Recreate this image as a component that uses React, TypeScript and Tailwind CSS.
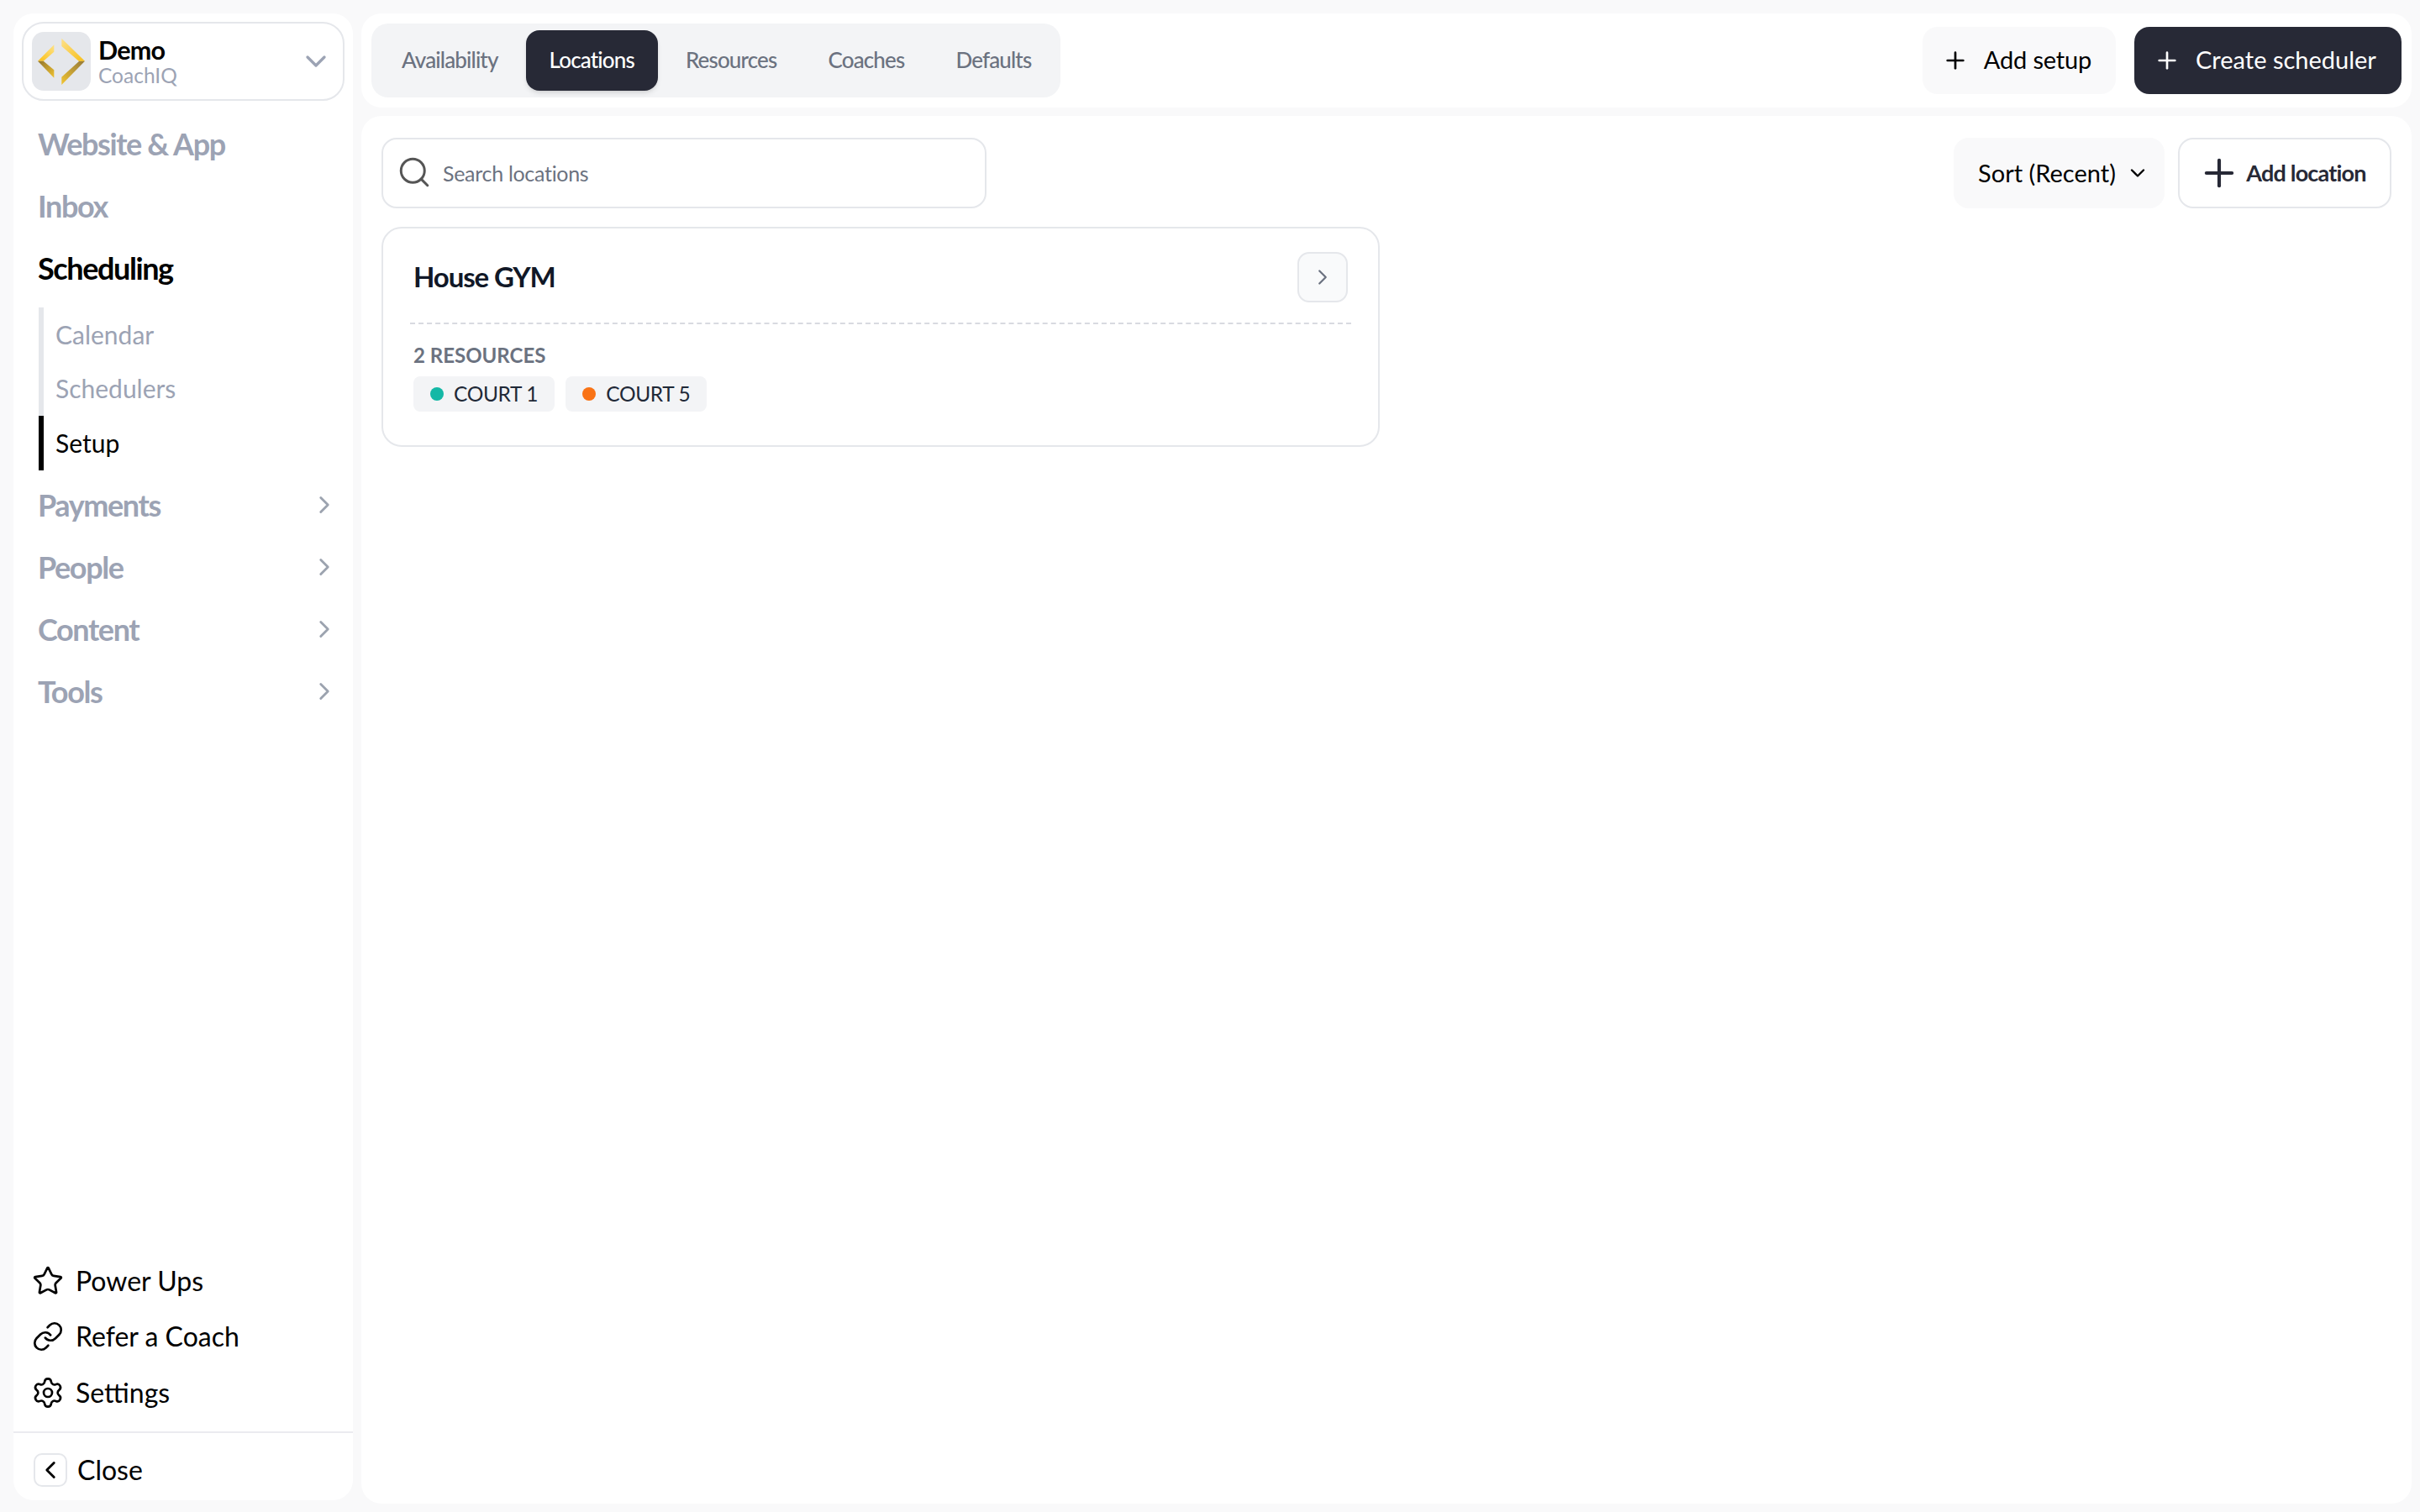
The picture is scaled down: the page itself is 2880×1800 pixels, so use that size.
import React from "react";
import { ChevronDown, ChevronRight, ChevronLeft, Plus, Search, Star, Link, Settings } from "lucide-react";

function Logo() {
  return (
    <svg viewBox="0 0 70 70" className="w-[70px] h-[70px]">
      <defs>
        <linearGradient id="ga" x1="0" y1="1" x2="1" y2="0">
          <stop offset="0" stopColor="#fbbf14" />
          <stop offset="1" stopColor="#fde288" />
        </linearGradient>
        <linearGradient id="gb" x1="0" y1="0" x2="1" y2="1">
          <stop offset="0" stopColor="#8f7430" />
          <stop offset="1" stopColor="#f0c22e" />
        </linearGradient>
        <linearGradient id="gc" x1="0" y1="0" x2="1" y2="1">
          <stop offset="0" stopColor="#fde08a" />
          <stop offset="1" stopColor="#f7bf1a" />
        </linearGradient>
        <linearGradient id="gd" x1="1" y1="0" x2="0" y2="1">
          <stop offset="0" stopColor="#94793a" />
          <stop offset="1" stopColor="#f2c531" />
        </linearGradient>
      </defs>
      <polygon points="26.3,15.3 7,34.7 13.7,34.7 26.3,23.7" fill="url(#ga)" />
      <polygon points="7,34.7 13.7,34.7 26.3,45.3 26.3,54.7" fill="url(#gb)" />
      <polygon points="35.3,7.7 63,34.7 56,35 35.3,17" fill="url(#gc)" />
      <polygon points="63,34.7 56,35 35.3,53.7 35.3,63" fill="url(#gd)" />
    </svg>
  );
}

function NavItem({ label, chevron, active }: { label: string; chevron?: boolean; active?: boolean }) {
  return (
    <div className="h-[74px] pl-[29px] pr-[17px] flex items-center justify-between">
      <span className={"text-[36px] font-bold tracking-[-1.4px] " + (active ? "text-black" : "text-[#9ca3b4]")}>{label}</span>
      {chevron && <ChevronRight className="w-[34px] h-[34px] text-[#9ca3af]" strokeWidth={2} />}
    </div>
  );
}

function SubItem({ label, active }: { label: string; active?: boolean }) {
  return (
    <div
      className={
        "h-[64.5px] border-l-[6px] pl-[14px] flex items-center text-[30px] " +
        (active ? "border-black text-black" : "border-[#e5e7eb] text-[#9ca3b4]")
      }
    >
      {label}
    </div>
  );
}

function FootItem({ icon, label }: { icon: React.ReactNode; label: string }) {
  return (
    <div className="h-[66.5px] pl-[21px] flex items-center gap-[13px] text-[32px] text-black">
      <span className="w-[40px] h-[40px] flex items-center justify-center">{icon}</span>
      <span>{label}</span>
    </div>
  );
}

function Tab({ label, active }: { label: string; active?: boolean }) {
  return (
    <div
      className={
        "h-[72px] px-[28px] flex items-center text-[26px] font-medium tracking-[-0.85px] rounded-[16px] " +
        (active ? "bg-[#272936] text-white shadow-md" : "text-[#6b7280]")
      }
    >
      <span className="-translate-y-[1px]">{label}</span>
    </div>
  );
}

function Chip({ color, label }: { color: string; label: string }) {
  return (
    <div className="h-[42px] px-[20px] bg-[#f3f4f6] rounded-[8px] flex items-center gap-[12px] text-[24.5px] text-[#1f2937] tracking-[-0.35px]">
      <span className={"w-[16px] h-[16px] rounded-full " + color} />
      {label}
    </div>
  );
}

export default function App() {
  return (
    <div
      className="w-[2880px] h-[1800px] bg-[#f9f9fa] pt-[16px] pl-[16px] pr-[10px] pb-[10px] flex gap-[10px] overflow-hidden"
      style={{ fontFamily: "Lato, sans-serif" }}
    >
      <aside className="w-[404px] h-[1770px] bg-white rounded-[24px] flex flex-col shrink-0">
        <div className="mx-[10px] mt-[10px] h-[94px] border-2 border-[#e5e7eb] rounded-[26px] flex items-center pl-[10px] pr-[12px]">
          <div className="w-[70px] h-[70px] bg-[#e5e7eb] rounded-[14px] shrink-0">
            <Logo />
          </div>
          <div className="ml-[9px] flex-1 flex flex-col">
            <span className="text-[30.5px] leading-[32px] font-bold text-black tracking-[-0.8px]">Demo</span>
            <span className="text-[24.5px] leading-[28px] text-[#9ca3b4] translate-y-[1px]">CoachIQ</span>
          </div>
          <ChevronDown className="w-[40px] h-[40px] text-[#9ca3b4]" strokeWidth={2} />
        </div>
        <nav className="mt-[14px] flex flex-col">
          <NavItem label="Website & App" />
          <NavItem label="Inbox" />
          <NavItem label="Scheduling" active />
          <div className="ml-[30px] mt-[10px] mb-[4px] flex flex-col">
            <SubItem label="Calendar" />
            <SubItem label="Schedulers" />
            <SubItem label="Setup" active />
          </div>
          <NavItem label="Payments" chevron />
          <NavItem label="People" chevron />
          <NavItem label="Content" chevron />
          <NavItem label="Tools" chevron />
        </nav>
        <div className="mt-auto flex flex-col pb-[13px]">
          <FootItem icon={<Star className="w-[38px] h-[38px]" strokeWidth={1.7} />} label="Power Ups" />
          <FootItem icon={<Link className="w-[38px] h-[38px]" strokeWidth={1.7} />} label="Refer a Coach" />
          <FootItem icon={<Settings className="w-[40px] h-[40px]" strokeWidth={1.6} />} label="Settings" />
        </div>
        <div className="h-[82px] border-t-2 border-[#ebebf0] pl-[24px] flex items-center gap-[12px] pt-[8px]">
          <span className="w-[40px] h-[40px] border-2 border-[#e5e7eb] rounded-[10px] flex items-center justify-center">
            <ChevronLeft className="w-[34px] h-[34px] text-black" strokeWidth={2} />
          </span>
          <span className="text-[32px] text-black">Close</span>
        </div>
      </aside>
      <main className="flex-1 flex flex-col gap-[10px] min-w-0">
        <header className="h-[112px] bg-white rounded-[24px] flex items-center justify-between pl-[12px] pr-[12px]">
          <div className="h-[88px] bg-[#f3f4f6] rounded-[20px] flex items-center pl-[8px] pr-[7px] gap-[5px]">
            <Tab label="Availability" />
            <Tab label="Locations" active />
            <Tab label="Resources" />
            <Tab label="Coaches" />
            <Tab label="Defaults" />
          </div>
          <div className="flex items-center gap-[22px]">
            <div className="w-[230px] h-[80px] bg-[#f9f9fa] rounded-[18px] flex items-center justify-center gap-[18px] pr-[6px] text-[29px] tracking-[-0.15px] text-black">
              <Plus className="w-[32px] h-[32px]" strokeWidth={2} />
              <span className="-translate-y-[1px]">Add setup</span>
            </div>
            <div className="w-[318px] h-[80px] bg-[#272936] rounded-[18px] flex items-center justify-center gap-[18px] pr-[7px] text-[29px] text-white">
              <Plus className="w-[32px] h-[32px]" strokeWidth={2} />
              <span className="-translate-y-[1px]">Create scheduler</span>
            </div>
          </div>
        </header>
        <section className="flex-1 bg-white rounded-[24px] px-[24px] pt-[26px]">
          <div className="flex items-center justify-between">
            <div className="w-[720px] h-[84px] border-2 border-[#e5e7eb] rounded-[18px] flex items-center pl-[16px] gap-[13px]">
              <Search className="w-[42px] h-[42px] text-[#555] -translate-y-[1px]" strokeWidth={1.7} />
              <span className="text-[25px] text-[#6b7280] tracking-[-0.3px] translate-y-[1px]">Search locations</span>
            </div>
            <div className="flex items-center gap-[16px]">
              <div className="w-[251px] h-[84px] bg-[#f9f9fa] rounded-[18px] flex items-center justify-center gap-[12px] pl-[11px] text-[29px] text-black">
                Sort (Recent)
                <ChevronDown className="w-[28px] h-[28px]" strokeWidth={2} />
              </div>
              <div className="w-[254px] h-[84px] border-2 border-[#e5e7eb] rounded-[18px] flex items-center justify-center gap-[6px] pr-[7px] text-[27px] font-bold text-[#272936] tracking-[-0.8px]">
                <Plus className="w-[52px] h-[52px]" strokeWidth={1.9} />
                Add location
              </div>
            </div>
          </div>
          <div className="mt-[22px] w-[1188px] h-[262px] border-2 border-[#e5e7eb] rounded-[24px] px-[32px] pt-[28px]">
            <div className="flex items-center justify-between h-[60px] pl-[4px] pr-[4px]">
              <span className="text-[33px] font-bold text-[#111827] tracking-[-1.1px]">House GYM</span>
              <span className="w-[60px] h-[60px] bg-[#f9fafb] border-2 border-[#e5e7eb] rounded-[14px] flex items-center justify-center">
                <ChevronRight className="w-[30px] h-[30px] text-[#6b7280]" strokeWidth={1.8} />
              </span>
            </div>
            <div className="mt-[24px] border-t-2 border-dashed border-[#d8dae0]" />
            <div className="pl-[4px] mt-[22px] text-[24px] font-bold text-[#6b7280] leading-[30px]">2 RESOURCES</div>
            <div className="pl-[4px] mt-[10px] flex gap-[13px]">
              <Chip color="bg-[#14b8a6]" label="COURT 1" />
              <Chip color="bg-[#f97316]" label="COURT 5" />
            </div>
          </div>
        </section>
      </main>
    </div>
  );
}
